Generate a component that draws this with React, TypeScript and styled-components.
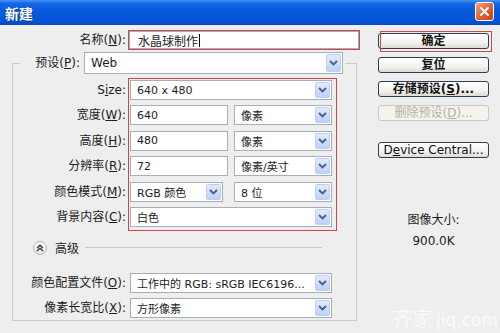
import React from 'react';
import styled, { createGlobalStyle } from 'styled-components';

const GlobalStyle = createGlobalStyle`
  html, body {
    margin: 0;
    padding: 0;
    background: #eeeeee;
  }
  body {
    font-family: "DejaVu Sans", "Noto Sans CJK SC", sans-serif;
  }
`;

const Win = styled.div`
  width: 500px;
  height: 333px;
  overflow: hidden;
  position: relative;
  display: flex;
  flex-direction: column;
  background: #eeeeee;
  color: #1c1c1c;
  font-family: "DejaVu Sans", "Noto Sans CJK SC", sans-serif;
  font-size: 12px;
`;

const TitleBar = styled.div`
  height: 25px;
  flex: none;
  display: flex;
  align-items: center;
  justify-content: space-between;
  padding: 0 6px 0 5px;
  box-sizing: border-box;
  background: linear-gradient(#4a94f5 0%, #1466e6 14%, #0558dc 50%, #0553d6 85%, #0948bc 100%);
`;

const Title = styled.span`
  color: #fff;
  font-weight: bold;
  font-size: 14px;
  font-family: "Noto Sans CJK SC", sans-serif;
  text-shadow: 1px 1px 0 #0b3a96;
`;

const CloseBtn = styled.div`
  width: 19px;
  height: 19px;
  margin-top: -2px;
  box-sizing: border-box;
  border: 1px solid #fff;
  border-radius: 3px;
  background: linear-gradient(135deg, #f3a07e, #de5f32 55%, #c4421b);
  display: flex;
  align-items: center;
  justify-content: center;
`;

const Body = styled.div`
  flex: 1;
  display: flex;
`;

const LeftCol = styled.div`
  display: flex;
  flex-direction: column;
`;

const NameRow = styled.div`
  display: flex;
  align-items: center;
  margin-top: 6px;
  height: 18px;
`;

const Label = styled.label<{ $w: number }>`
  width: ${p => p.$w}px;
  flex: none;
  text-align: right;
  font-size: 12px;
  line-height: 20px;
  white-space: nowrap;
  color: #1c1c1c;
`;

const U = styled.span`
  text-decoration: underline;
`;

const NameInput = styled.div`
  margin-left: 3px;
  width: 230px;
  height: 18px;
  box-sizing: border-box;
  border: 1px solid #a7aeb8;
  background: #fff;
  box-shadow: 0 0 0 1px #c9494b;
  display: flex;
  align-items: center;
  padding-left: 8px;
  font-size: 12px;
`;

const Caret = styled.span`
  display: inline-block;
  width: 1px;
  height: 13px;
  background: #000;
  margin-left: 1px;
`;

const Group = styled.fieldset`
  margin: 3px 0 0 12px;
  padding: 0 0 2px 0;
  width: 345px;
  box-sizing: border-box;
  min-width: 0;
  border: 1px solid #cbcbcb;
`;

const Legend = styled.legend`
  margin-left: 7px;
  padding: 0 2px;
  display: flex;
  align-items: center;
`;

const Field = styled.div<{ $w: number; $h?: number }>`
  width: ${p => p.$w}px;
  height: ${p => p.$h ?? 20}px;
  flex: none;
  box-sizing: border-box;
  border: 1px solid #a7aeb8;
  background: #fff;
  display: flex;
  align-items: center;
`;

const Value = styled.span`
  flex: 1;
  padding-left: 6px;
  font-size: 11px;
  white-space: nowrap;
  overflow: hidden;
  color: #1c1c1c;
`;

const ArrowBtn = styled.span`
  flex: none;
  width: 15px;
  align-self: stretch;
  margin: 1px 1px 1px 0;
  box-sizing: border-box;
  border: 1px solid #bccff5;
  border-radius: 2px;
  background: linear-gradient(#e2ebfd, #bcd1fa);
  display: flex;
  align-items: center;
  justify-content: center;
`;

const Block = styled.div`
  display: flex;
  margin-top: 4px;
`;

const LabelStack = styled.div`
  width: 113px;
  margin-right: 2px;
  padding-top: 2px;
  display: flex;
  flex-direction: column;
  gap: 5.4px;
`;

const Highlight = styled.div`
  border: 1px solid #c9494b;
  padding: 1px 4px 3px 1px;
  display: flex;
  flex-direction: column;
  gap: 5.4px;
`;

const Pair = styled.div`
  width: 202px;
  display: flex;
  justify-content: space-between;
`;

const Advanced = styled.div`
  display: flex;
  align-items: center;
  height: 16px;
  margin: 9px 34px 0 20px;
`;

const RoundBtn = styled.span`
  width: 14px;
  height: 14px;
  box-sizing: border-box;
  border-radius: 50%;
  border: 1px solid #b4b4b4;
  background: linear-gradient(#ffffff, #e4e4e4);
  display: flex;
  align-items: center;
  justify-content: center;
`;

const AdvText = styled.span`
  margin-left: 8px;
  font-size: 12px;
`;

const Rule = styled.span`
  flex: 1;
  margin-left: 6px;
  height: 1px;
  background: #c8c8c8;
`;

const AdvRows = styled.div`
  margin-top: 17px;
  display: flex;
  flex-direction: column;
  gap: 5px;
`;

const Row = styled.div`
  display: flex;
  align-items: center;
  gap: 4px;
`;

const RightCol = styled.div`
  margin-left: 19px;
  padding-top: 8px;
  width: 111px;
  display: flex;
  flex-direction: column;
  align-items: center;
`;

const Button = styled.div<{ $strong?: boolean; $disabled?: boolean; $gap?: number }>`
  position: relative;
  width: 111px;
  height: 16px;
  margin-top: ${p => p.$gap ?? 0}px;
  box-sizing: border-box;
  border: 1px solid ${p => (p.$disabled ? '#cac8bb' : '#2f3c52')};
  border-radius: 3px;
  background: ${p => (p.$disabled ? '#f4f3ee' : 'linear-gradient(#ffffff, #f3f3ef 60%, #dedcd3)')};
  color: ${p => (p.$disabled ? '#b3b0a2' : '#111')};
  font-weight: ${p => (p.$strong ? 600 : 400)};
  font-size: 12px;
  line-height: 14px;
  text-align: center;
  white-space: nowrap;
`;

const OkMark = styled.span`
  position: absolute;
  left: 1px;
  right: -4px;
  top: -3px;
  bottom: -4px;
  border: 1px solid #c9494b;
  pointer-events: none;
`;

const Info = styled.div<{ $gap: number }>`
  margin-top: ${p => p.$gap}px;
  font-size: 12px;
  line-height: 16px;
  color: #1c1c1c;
`;

const Watermark = styled.div`
  position: absolute;
  right: 2px;
  bottom: 1px;
  display: flex;
  align-items: baseline;
  color: rgba(255, 255, 255, 0.8);
  pointer-events: none;
`;

const WmHan = styled.span`
  font-family: "Noto Sans CJK SC", sans-serif;
  font-weight: 300;
  font-size: 21px;
`;

const WmLatin = styled.span`
  font-family: "DejaVu Sans", sans-serif;
  font-size: 17px;
  margin-left: 2px;
`;

const Chevron = () => (
  <svg width="9" height="6" viewBox="0 0 9 6">
    <polyline points="1,1 4.5,4.5 8,1" fill="none" stroke="#4a5f88" strokeWidth="1.8" />
  </svg>
);

const Select = ({ w, h, children }: { w: number; h?: number; children: React.ReactNode }) => (
  <Field $w={w} $h={h}>
    <Value>{children}</Value>
    <ArrowBtn>
      <Chevron />
    </ArrowBtn>
  </Field>
);

const Input = ({ w, children }: { w: number; children: React.ReactNode }) => (
  <Field $w={w}>
    <Value>{children}</Value>
  </Field>
);

export default function App() {
  return (
    <Win>
      <GlobalStyle />
      <TitleBar>
        <Title>新建</Title>
        <CloseBtn>
          <svg width="11" height="11" viewBox="0 0 11 11">
            <path d="M2 2 L9 9 M9 2 L2 9" stroke="#fff" strokeWidth="2" strokeLinecap="round" />
          </svg>
        </CloseBtn>
      </TitleBar>
      <Body>
        <LeftCol>
          <NameRow>
            <Label $w={126}>
              名称(<U>N</U>):
            </Label>
            <NameInput>
              水晶球制作
              <Caret />
            </NameInput>
          </NameRow>
          <Group>
            <Legend>
              <Label $w={58}>
                预设(<U>P</U>):
              </Label>
              <span style={{ width: 4 }} />
              <Select w={259} h={22}>
                <span style={{ fontSize: 12 }}>Web</span>
              </Select>
            </Legend>
            <Block>
              <LabelStack>
                <Label $w={113}>
                  S<U>i</U>ze:
                </Label>
                <Label $w={113}>
                  宽度(<U>W</U>):
                </Label>
                <Label $w={113}>
                  高度(<U>H</U>):
                </Label>
                <Label $w={113}>
                  分辨率(<U>R</U>):
                </Label>
                <Label $w={113}>
                  颜色模式(<U>M</U>):
                </Label>
                <Label $w={113}>
                  背景内容(<U>C</U>):
                </Label>
              </LabelStack>
              <Highlight>
                <Select w={202}>640 x 480</Select>
                <Pair>
                  <Input w={98}>640</Input>
                  <Select w={98}>像素</Select>
                </Pair>
                <Pair>
                  <Input w={98}>480</Input>
                  <Select w={98}>像素</Select>
                </Pair>
                <Pair>
                  <Input w={98}>72</Input>
                  <Select w={98}>像素/英寸</Select>
                </Pair>
                <Pair>
                  <Select w={93}>RGB 颜色</Select>
                  <Select w={98}>8 位</Select>
                </Pair>
                <Select w={202}>白色</Select>
              </Highlight>
            </Block>
            <Advanced>
              <RoundBtn>
                <svg width="8" height="8" viewBox="0 0 8 8">
                  <polyline points="1,4 4,1.2 7,4" fill="none" stroke="#333" strokeWidth="1.3" />
                  <polyline points="1,7 4,4.2 7,7" fill="none" stroke="#333" strokeWidth="1.3" />
                </svg>
              </RoundBtn>
              <AdvText>高级</AdvText>
              <Rule />
            </Advanced>
            <AdvRows>
              <Row>
                <Label $w={113}>
                  颜色配置文件(<U>O</U>):
                </Label>
                <Select w={202}>工作中的 RGB: sRGB IEC6196...</Select>
              </Row>
              <Row>
                <Label $w={113}>
                  像素长宽比(<U>X</U>):
                </Label>
                <Select w={202}>方形像素</Select>
              </Row>
            </AdvRows>
          </Group>
        </LeftCol>
        <RightCol>
          <Button $strong>
            确定
            <OkMark />
          </Button>
          <Button $strong $gap={8}>
            复位
          </Button>
          <Button $strong $gap={8}>
            存储预设(<U>S</U>)...
          </Button>
          <Button $disabled $gap={8}>
            删除预设(<U>D</U>)...
          </Button>
          <Button $gap={21}>
            D<U>e</U>vice Central...
          </Button>
          <Info $gap={54}>图像大小:</Info>
          <Info $gap={5}>900.0K</Info>
        </RightCol>
      </Body>
      <Watermark>
        <WmHan>齐家</WmHan>
        <WmLatin>jiq.com</WmLatin>
      </Watermark>
    </Win>
  );
}
